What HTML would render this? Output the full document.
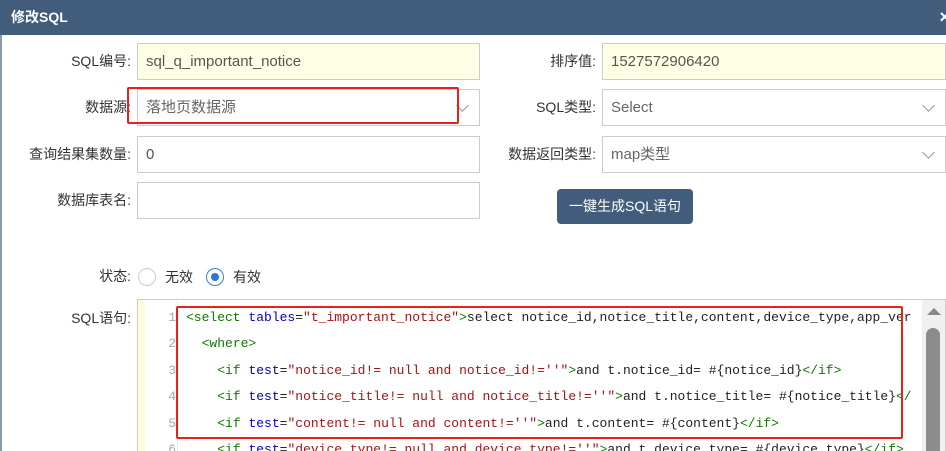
<!DOCTYPE html>
<html><head><meta charset="utf-8"><style>
*{margin:0;padding:0;box-sizing:border-box}
body{width:946px;height:451px;overflow:hidden;background:#fff;font-family:"Liberation Sans","Noto Sans CJK SC",sans-serif;font-size:14px;color:#333;position:relative}
.hd{position:absolute;left:0;top:0;width:946px;height:35px;background:#425d7b;color:#fff;font-weight:bold;font-size:14px;line-height:35px;padding-left:11px}
.x{position:absolute;right:-4px;top:0;color:#fff;font-size:18px;font-weight:bold}
.lb{position:absolute;text-align:right;line-height:37px;color:#333}
.in{position:absolute;height:37px;border:1px solid #ccc;line-height:35px;padding-left:8px;color:#555;font-size:15px}
.y{background:#ffffe6}
.chev{position:absolute;right:12px;top:11px;width:9px;height:9px;border-right:1px solid #999;border-bottom:1px solid #999;transform:rotate(45deg)}
.btn{position:absolute;left:557px;top:189px;width:136px;height:35px;background:#425d7b;color:#fff;border-radius:4px;text-align:center;line-height:35px;font-size:14px}
.rad{position:absolute;width:18px;height:18px;border-radius:50%;border:1px solid #ccc;background:#fff}
.ed{position:absolute;left:137px;top:299px;width:809px;height:152px;border:1px solid #ccc;border-bottom:none;overflow:hidden}
.gut{position:absolute;left:0;top:0;width:40px;height:152px;background:#fff;border-right:1px solid #eee}
.gut .ys{position:absolute;left:0;top:0;width:7px;height:152px;background:#fffbe0}
.ln{position:absolute;left:0;width:38px;text-align:right;font-family:"Liberation Mono",monospace;font-size:13px;color:#aaa}
.cl{position:absolute;left:48px;white-space:pre;font-family:"Liberation Mono",monospace;font-size:13px;color:#222}
.t{color:#170}.a{color:#00c}.s{color:#a11}
.sb{position:absolute;left:784px;top:0;width:24px;height:152px;background:#f0f0f0}
</style></head><body>
<div class="hd">修改SQL<span class="x">×</span></div>
<div style="position:absolute;left:0;top:35px;width:2px;height:416px;background:#8a9aac"></div>

<div class="lb" style="left:0;width:131px;top:43px">SQL编号:</div>
<div class="in y" style="left:137px;top:43px;width:343px">sql_q_important_notice</div>
<div class="lb" style="left:0;width:131px;top:89px">数据源:</div>
<div class="in" style="left:137px;top:89px;width:343px;color:#666">落地页数据源<span class="chev"></span></div>
<div style="position:absolute;left:127px;top:87px;width:332px;height:37px;border:2px solid #e8211b;border-radius:2px"></div>
<div class="lb" style="left:0;width:131px;top:136px">查询结果集数量:</div>
<div class="in" style="left:137px;top:136px;width:343px">0</div>
<div class="lb" style="left:0;width:131px;top:182px">数据库表名:</div>
<div class="in" style="left:137px;top:182px;width:343px"></div>

<div class="lb" style="left:480px;width:116px;top:43px">排序值:</div>
<div class="in y" style="left:602px;top:43px;width:344px">1527572906420</div>
<div class="lb" style="left:480px;width:116px;top:89px">SQL类型:</div>
<div class="in" style="left:602px;top:89px;width:344px;color:#666">Select<span class="chev"></span></div>
<div class="lb" style="left:480px;width:116px;top:136px">数据返回类型:</div>
<div class="in" style="left:602px;top:136px;width:344px;color:#666">map类型<span class="chev"></span></div>
<div class="btn">一键生成SQL语句</div>

<div class="lb" style="left:0;width:131px;top:258px">状态:</div>
<div class="rad" style="left:138px;top:268px"></div>
<div style="position:absolute;left:165px;top:268px;line-height:18px">无效</div>
<div class="rad" style="left:206px;top:268px;border-color:#3d7fd0"><div style="position:absolute;left:4px;top:4px;width:8px;height:8px;border-radius:50%;background:#2a78d6"></div></div>
<div style="position:absolute;left:233px;top:268px;line-height:18px">有效</div>

<div class="lb" style="left:0;width:131px;top:299px;line-height:38px">SQL语句:</div>
<div class="ed">
<div class="gut"><div class="ys"></div>
<div class="ln" style="top:10px">1</div><div class="ln" style="top:36px">2</div><div class="ln" style="top:63px">3</div><div class="ln" style="top:89px">4</div><div class="ln" style="top:116px">5</div><div class="ln" style="top:142px">6</div>
</div>
<div class="cl" style="top:10px"><span class="t">&lt;select</span> <span class="a">tables</span>=<span class="s">"t_important_notice"</span><span class="t">&gt;</span>select notice_id,notice_title,content,device_type,app_ver</div>
<div class="cl" style="top:36px">  <span class="t">&lt;where&gt;</span></div>
<div class="cl" style="top:63px">    <span class="t">&lt;if</span> <span class="a">test</span>=<span class="s">"notice_id!= null and notice_id!=''"</span><span class="t">&gt;</span>and t.notice_id= #{notice_id}<span class="t">&lt;/if&gt;</span></div>
<div class="cl" style="top:89px">    <span class="t">&lt;if</span> <span class="a">test</span>=<span class="s">"notice_title!= null and notice_title!=''"</span><span class="t">&gt;</span>and t.notice_title= #{notice_title}<span class="t">&lt;/</span></div>
<div class="cl" style="top:116px">    <span class="t">&lt;if</span> <span class="a">test</span>=<span class="s">"content!= null and content!=''"</span><span class="t">&gt;</span>and t.content= #{content}<span class="t">&lt;/if&gt;</span></div>
<div class="cl" style="top:142px">    <span class="t">&lt;if</span> <span class="a">test</span>=<span class="s">"device_type!= null and device_type!=''"</span><span class="t">&gt;</span>and t.device_type= #{device_type}<span class="t">&lt;/if&gt;</span></div>
<div class="sb">
<div style="position:absolute;left:5px;top:8px;width:0;height:0;border-left:7px solid transparent;border-right:7px solid transparent;border-bottom:7px solid #888"></div>
<div style="position:absolute;left:4px;top:28px;width:14px;height:130px;border-radius:7px;background:#8c8c8c"></div>
</div>
</div>
<div style="position:absolute;left:176px;top:306px;width:727px;height:133px;border:2px solid #e8211b;border-radius:2px"></div>
</body></html>
